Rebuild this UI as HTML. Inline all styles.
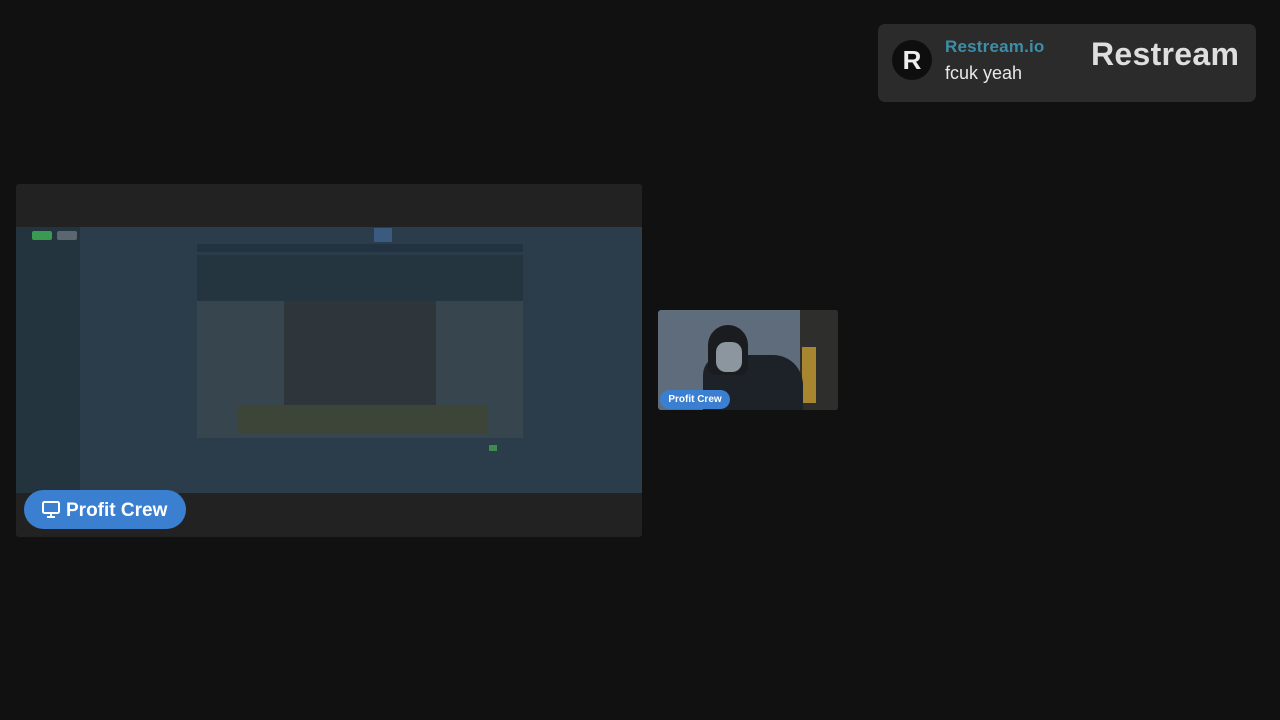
<!DOCTYPE html>
<html><head><meta charset="utf-8"><style>
*{margin:0;padding:0;box-sizing:border-box}
body{width:1280px;height:720px;background:#111111;position:relative;overflow:hidden;font-family:"Liberation Sans",sans-serif}
.a{position:absolute}
</style></head><body>
<div class="a" style="left:878px;top:24px;width:378px;height:78px;background:#2b2b2b;border-radius:7px"></div>
<div class="a" style="left:892px;top:40px;width:40px;height:40px;border-radius:50%;background:#0e0e0e;color:#eee;font-weight:bold;font-size:26px;text-align:center;line-height:40px">R</div>
<div class="a" style="left:945px;top:37px;color:#3d8fa8;font-size:17px;font-weight:bold;letter-spacing:0.2px">Restream.io</div>
<div class="a" style="left:945px;top:63px;color:#e8e8e8;font-size:18px">fcuk yeah</div>
<div class="a" style="left:1091px;top:36px;color:#dedede;font-size:32px;font-weight:bold;letter-spacing:0.3px">Restream</div>

<div class="a" style="left:16px;top:184px;width:626px;height:353px;background:#222222;border-radius:3px"></div>
<div class="a" style="left:16px;top:227px;width:626px;height:266px;background:#2b3d4b"></div>
<div class="a" style="left:16px;top:227px;width:64px;height:266px;background:#24343f"></div>
<div class="a" style="left:32px;top:231px;width:20px;height:9px;background:#3a9a52;border-radius:2px"></div>
<div class="a" style="left:57px;top:231px;width:20px;height:9px;background:#5a6670;border-radius:2px"></div>
<div class="a" style="left:197px;top:244px;width:326px;height:8px;background:#223240"></div>
<div class="a" style="left:197px;top:255px;width:326px;height:46px;background:#25353f"></div>
<div class="a" style="left:197px;top:301px;width:326px;height:137px;background:#36454e"></div>
<div class="a" style="left:284px;top:301px;width:152px;height:104px;background:#2e363c"></div>
<div class="a" style="left:238px;top:405px;width:250px;height:28px;background:#3d4538"></div>
<div class="a" style="left:374px;top:228px;width:18px;height:14px;background:#3b5a80"></div>
<div class="a" style="left:489px;top:445px;width:8px;height:6px;background:#3f8a4e"></div>
<div class="a" style="left:24px;top:490px;width:162px;height:39px;background:#3b7fd0;border-radius:20px;color:#fff;font-weight:bold;font-size:19px;line-height:41px;padding-left:42px">Profit Crew</div>
<svg class="a" style="left:42px;top:501px" width="18" height="17" viewBox="0 0 18 17"><rect x="1" y="1" width="16" height="11" rx="1.5" fill="none" stroke="#fff" stroke-width="2"/><path d="M9 12v3M5 16h8" stroke="#fff" stroke-width="2"/></svg>

<div class="a" style="left:658px;top:310px;width:180px;height:100px;background:#5e6c7c;border-radius:3px;overflow:hidden">
<div class="a" style="left:142px;top:0;width:38px;height:100px;background:#2e2e2c"></div>
<div class="a" style="left:144px;top:37px;width:14px;height:56px;background:#a88630"></div>
<div class="a" style="left:45px;top:45px;width:100px;height:60px;background:#1d2228;border-radius:20px 30px 0 0"></div>
<div class="a" style="left:50px;top:15px;width:40px;height:50px;background:#1a1c20;border-radius:20px 20px 8px 8px"></div>
<div class="a" style="left:58px;top:32px;width:26px;height:30px;background:#8c969e;border-radius:10px"></div>
</div>
<div class="a" style="left:660px;top:390px;width:70px;height:19px;background:#3b7fd0;border-radius:10px;color:#fff;font-weight:bold;font-size:10px;line-height:19px;text-align:center">Profit Crew</div>
</body></html>
